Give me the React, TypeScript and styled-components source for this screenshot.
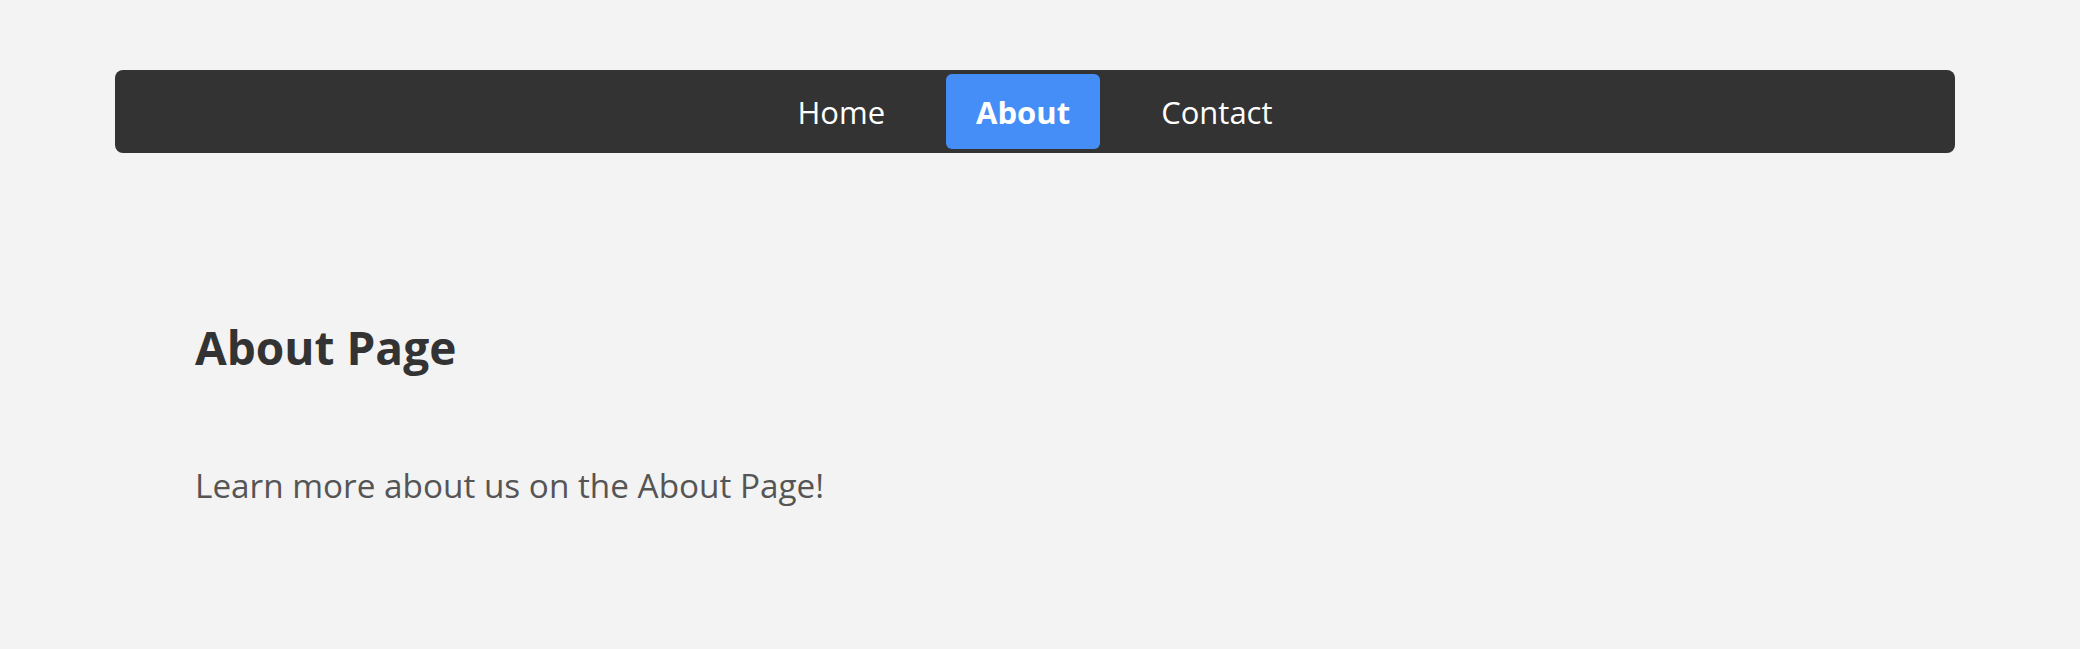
import styled, { createGlobalStyle } from "styled-components";

const GlobalStyle = createGlobalStyle`
  html, body {
    margin: 0;
    padding: 0;
    background: #f3f3f3;
    font-family: "Open Sans", "Noto Sans", sans-serif;
  }
`;

const links = ["Home", "About", "Contact"];

const App = () => {
  const active = "About";

  return (
    <>
      <GlobalStyle />
      <PageStyled>
        <NavStyled>
          {links.map((link) => (
            <NavLink key={link} href="#" active={link === active}>
              {link}
            </NavLink>
          ))}
        </NavStyled>
        <ContentStyled>
          <h1>About Page</h1>
          <p>Learn more about us on the About Page!</p>
        </ContentStyled>
      </PageStyled>
    </>
  );
};

const PageStyled = styled.div`
  padding: 70px 125px 0 115px;
`;

const NavStyled = styled.nav`
  height: 83px;
  background: #333333;
  border-radius: 8px;
  display: flex;
  justify-content: center;
  align-items: center;
  gap: 31px;
`;

interface INavLink {
  active?: boolean;
}

const NavLink = styled.a.withConfig({
  shouldForwardProp: (prop) => prop !== "active",
})<INavLink>`
  display: flex;
  align-items: center;
  height: 75px;
  padding: 0 30px;
  box-sizing: border-box;
  border-radius: 6px;
  color: #ffffff;
  text-decoration: none;
  font-size: 31px;
  font-weight: ${(props) => (props.active ? 700 : 400)};
  background: ${(props) => (props.active ? "#458ef7" : "transparent")};
`;

const ContentStyled = styled.main`
  padding: 163px 0 0 80px;
  h1 {
    margin: 0;
    font-size: 46px;
    font-weight: 700;
    color: #333333;
  }
  p {
    margin: 84px 0 0;
    font-size: 33.3px;
    color: #555555;
  }
`;

export default App;
